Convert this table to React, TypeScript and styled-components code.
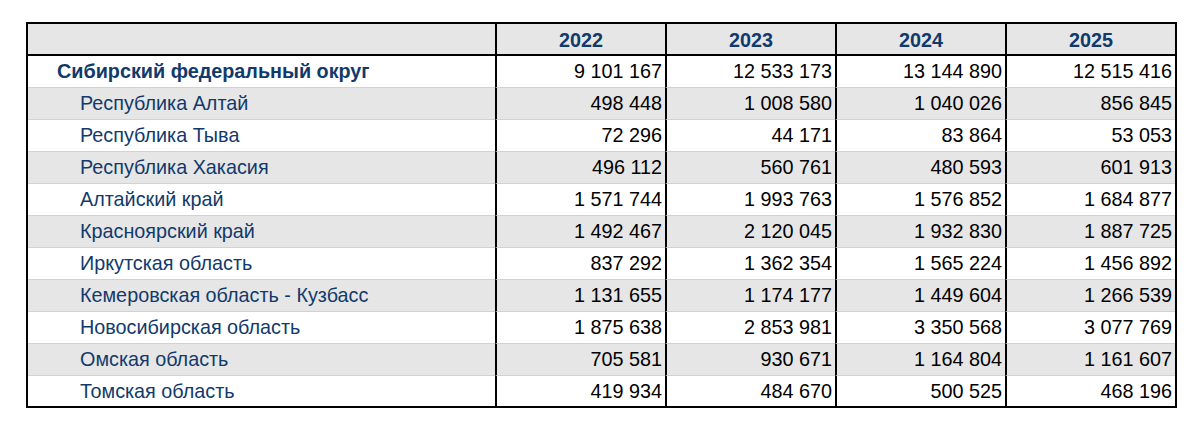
import styled, { createGlobalStyle } from "styled-components";

import { FC } from "react";

type Row = {
  name: string;
  values: string[];
  total?: boolean;
};

const years = ["2022", "2023", "2024", "2025"];

const rows: Row[] = [
  {
    name: "Сибирский федеральный округ",
    values: ["9 101 167", "12 533 173", "13 144 890", "12 515 416"],
    total: true,
  },
  { name: "Республика Алтай", values: ["498 448", "1 008 580", "1 040 026", "856 845"] },
  { name: "Республика Тыва", values: ["72 296", "44 171", "83 864", "53 053"] },
  { name: "Республика Хакасия", values: ["496 112", "560 761", "480 593", "601 913"] },
  { name: "Алтайский край", values: ["1 571 744", "1 993 763", "1 576 852", "1 684 877"] },
  { name: "Красноярский край", values: ["1 492 467", "2 120 045", "1 932 830", "1 887 725"] },
  { name: "Иркутская область", values: ["837 292", "1 362 354", "1 565 224", "1 456 892"] },
  {
    name: "Кемеровская область - Кузбасс",
    values: ["1 131 655", "1 174 177", "1 449 604", "1 266 539"],
  },
  {
    name: "Новосибирская область",
    values: ["1 875 638", "2 853 981", "3 350 568", "3 077 769"],
  },
  { name: "Омская область", values: ["705 581", "930 671", "1 164 804", "1 161 607"] },
  { name: "Томская область", values: ["419 934", "484 670", "500 525", "468 196"] },
];

const App: FC = () => (
  <>
    <GlobalStyle />
    <Page>
      <Table>
        <HeaderCell />
        {years.map((y) => (
          <HeaderCell key={y} $year>
            {y}
          </HeaderCell>
        ))}
        {rows.map((row, i) => {
          const shaded = i % 2 === 1;
          const last = i === rows.length - 1;
          return [
            <NameCell
              key={row.name}
              $shaded={shaded}
              $last={last}
              $total={row.total}
            >
              {row.name}
            </NameCell>,
            ...row.values.map((v, j) => (
              <ValueCell key={row.name + j} $shaded={shaded} $last={last}>
                {v}
              </ValueCell>
            )),
          ];
        })}
      </Table>
    </Page>
  </>
);

export default App;

const GlobalStyle = createGlobalStyle`
  body {
    margin: 0;
    background: #fff;
    font-family: "Liberation Sans", Arial, sans-serif;
  }
`;

const Page = styled.div`
  padding: 22px 26px;
`;

const Table = styled.div`
  display: grid;
  grid-template-columns: 467px repeat(4, 170px);
  width: 1151px;
  box-sizing: border-box;
  border: 2px solid #000;
  font-size: 19.8px;
`;

const HeaderCell = styled.div<{ $year?: boolean }>`
  height: 32px;
  box-sizing: border-box;
  background: #e6e6e6;
  border-bottom: 2px solid #000;
  border-left: ${(p) => (p.$year ? "2px solid #000" : "none")};
  display: flex;
  align-items: center;
  justify-content: center;
  padding-top: 2px;
  font-weight: bold;
  color: #113a6b;
`;

const Cell = styled.div<{ $shaded: boolean; $last: boolean }>`
  height: ${(p) => (p.$last ? "30px" : "32px")};
  box-sizing: border-box;
  background: ${(p) => (p.$shaded ? "#e6e6e6" : "#fff")};
  border-bottom: ${(p) => (p.$last ? "none" : "1px solid #d2d2d2")};
  display: flex;
  align-items: center;
  white-space: nowrap;
`;

const NameCell = styled(Cell)<{ $total?: boolean }>`
  padding-left: ${(p) => (p.$total ? "29px" : "52px")};
  font-weight: ${(p) => (p.$total ? "bold" : "normal")};
  color: #113a6b;
`;

const ValueCell = styled(Cell)`
  border-left: 2px solid #000;
  justify-content: flex-end;
  padding-right: 3px;
  color: #000;
`;
